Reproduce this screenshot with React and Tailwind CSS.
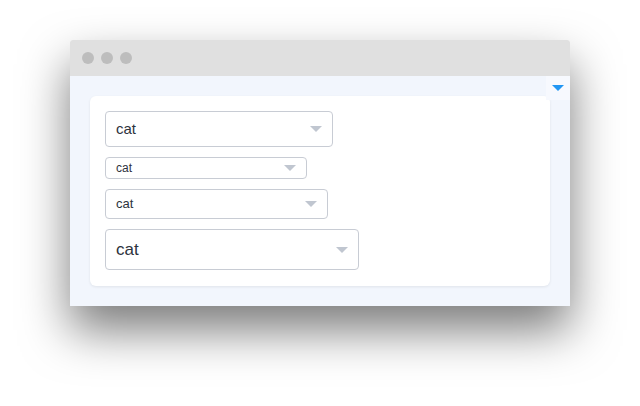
import React from "react";

const sizes = [
  { w: "w-[228px]", h: "h-[36px]", text: "text-[15px]" },
  { w: "w-[202px]", h: "h-[22px]", text: "text-[12px]" },
  { w: "w-[223px]", h: "h-[30px]", text: "text-[13px]" },
  { w: "w-[254px]", h: "h-[41px]", text: "text-[17px]" },
];

const Caret = ({ className }) => (
  <svg width="12" height="6" viewBox="0 0 12 6" className={className}>
    <path d="M0 0 L12 0 L6 6 Z" fill="currentColor" />
  </svg>
);

const Select = ({ s }) => (
  <div
    className={`${s.w} ${s.h} ${s.text} flex items-center justify-between pl-[10px] pr-[10px] border border-[#c8ccd4] rounded-[4px] bg-white text-[#2d333d]`}
  >
    <span>cat</span>
    <Caret className="text-[#c0c6d0]" />
  </div>
);

const App = () => {
  return (
    <div className="w-[640px] h-[406px] bg-white pt-[40px] pl-[70px] font-['Liberation_Sans',Arial,sans-serif]">
      <div className="w-[500px] shadow-[0_24px_48px_rgba(0,0,0,0.52)] rounded-t-[3px]">
        <div className="h-[36px] bg-[#e0e0e0] rounded-t-[3px] flex items-center gap-[7px] pl-[12px]">
          <span className="w-[12px] h-[12px] rounded-full bg-[#bdbdbd]" />
          <span className="w-[12px] h-[12px] rounded-full bg-[#bdbdbd]" />
          <span className="w-[12px] h-[12px] rounded-full bg-[#bdbdbd]" />
        </div>
        <div className="relative bg-[#f2f6fd] p-[20px]">
          <button className="absolute top-0 right-0 w-[24px] h-[24px] bg-[#f7f9fe] flex items-center justify-center">
            <Caret className="text-[#2196f3]" />
          </button>
          <div className="bg-white rounded-[6px] shadow-[0_1px_3px_rgba(0,0,0,0.08)] p-[15px] pb-[16px] flex flex-col items-start gap-[10px]">
            {sizes.map((s, i) => (
              <Select key={i} s={s} />
            ))}
          </div>
        </div>
      </div>
    </div>
  );
};

export default App;
